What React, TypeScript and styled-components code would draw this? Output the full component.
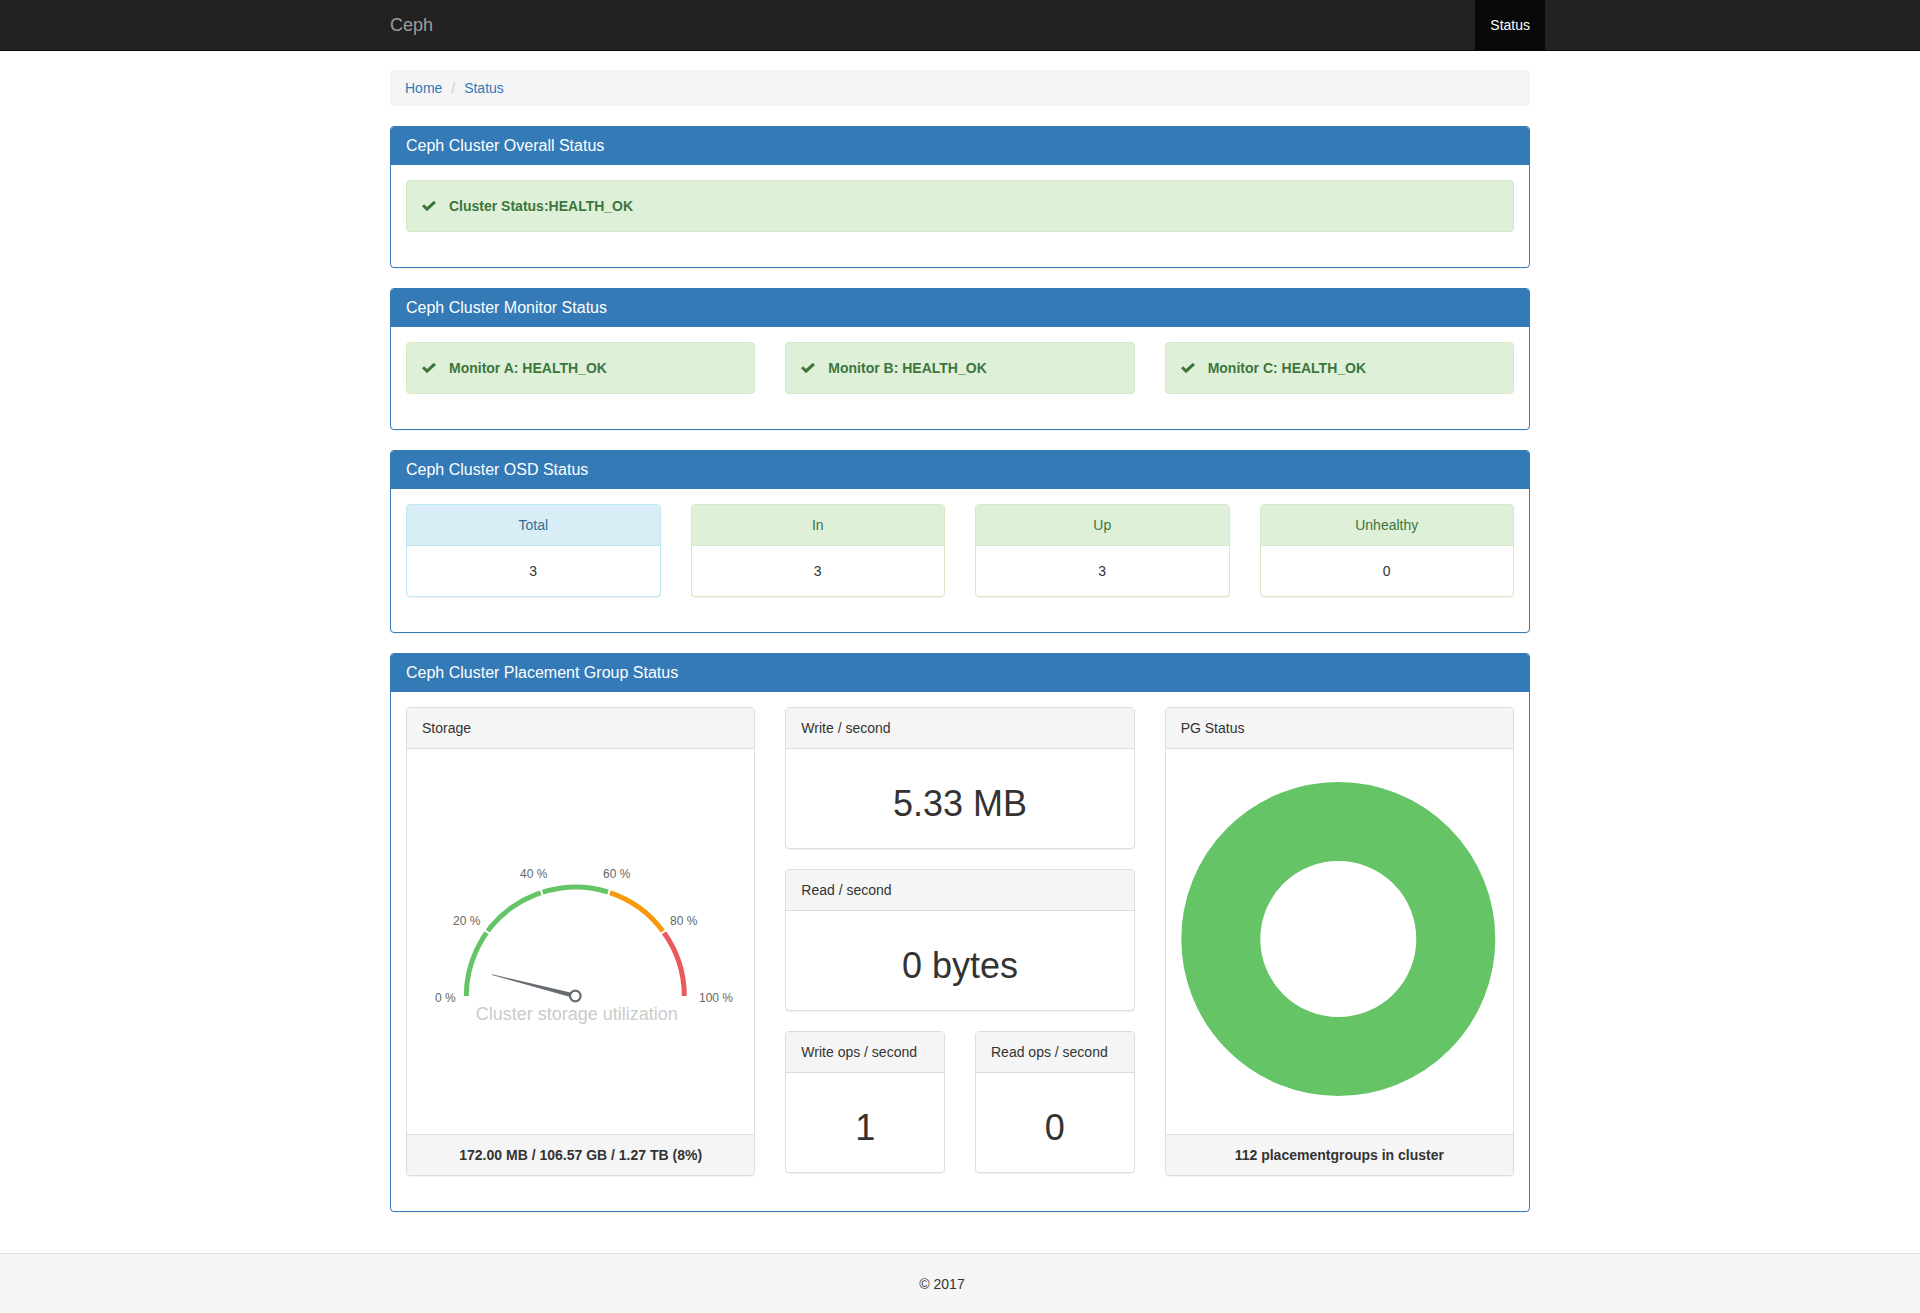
import React from "react";
import styled, { createGlobalStyle } from "styled-components";

const GlobalStyle = createGlobalStyle`
  *, *::before, *::after { box-sizing: border-box; }
  html, body { margin: 0; padding: 0; }
  body {
    font-family: "Liberation Sans", Arial, Helvetica, sans-serif;
    font-size: 14px;
    line-height: 1.42857143;
    color: #333;
    background: #fff;
  }
`;

type Variant = "primary" | "default" | "info" | "success";

const variants: Record<Variant, { border: string; headBg: string; headColor: string }> = {
  primary: { border: "#337ab7", headBg: "#337ab7", headColor: "#fff" },
  default: { border: "#ddd", headBg: "#f5f5f5", headColor: "#333" },
  info: { border: "#bce8f1", headBg: "#d9edf7", headColor: "#31708f" },
  success: { border: "#d6e9c6", headBg: "#dff0d8", headColor: "#3c763d" },
};

const Page = styled.div`
  display: flex;
  flex-direction: column;
  min-height: 100vh;
`;

const Navbar = styled.nav`
  background: #222;
  border-bottom: 1px solid #080808;
  height: 51px;
  margin-bottom: 19px;
`;

const NavInner = styled.div`
  width: 1170px;
  height: 100%;
  margin: 0 auto;
  padding: 0 15px;
  display: flex;
  justify-content: space-between;
  align-items: stretch;
`;

const Brand = styled.a`
  margin-left: -15px;
  padding: 15px;
  font-size: 18px;
  line-height: 20px;
  color: #9d9d9d;
  text-decoration: none;
`;

const NavLink = styled.a`
  margin-right: -15px;
  padding: 15px;
  line-height: 20px;
  color: #fff;
  background: #080808;
  text-decoration: none;
`;

const Container = styled.main`
  width: 1170px;
  margin: 0 auto;
  padding: 0 15px;
`;

const Breadcrumb = styled.ol`
  display: flex;
  list-style: none;
  margin: 0 0 20px;
  padding: 8px 15px;
  background: #f5f5f5;
  border-radius: 4px;
`;

const Crumb = styled.li`
  color: #337ab7;
`;

const CrumbSep = styled.li`
  color: #ccc;
  padding: 0 5px 0 9px;
`;

const Panel = styled.section<{ $variant: Variant }>`
  background: #fff;
  border: 1px solid ${(p) => variants[p.$variant].border};
  border-radius: 4px;
  box-shadow: 0 1px 1px rgba(0, 0, 0, 0.05);
  margin-bottom: 20px;
`;

const PanelHeading = styled.div<{ $variant: Variant; $center?: boolean }>`
  padding: 10px 15px;
  background: ${(p) => variants[p.$variant].headBg};
  color: ${(p) => variants[p.$variant].headColor};
  border-bottom: 1px solid ${(p) => variants[p.$variant].border};
  border-radius: 3px 3px 0 0;
  text-align: ${(p) => (p.$center ? "center" : "left")};
`;

const PanelTitle = styled.h3`
  margin: 0;
  font-size: 16px;
  font-weight: 400;
  line-height: 17px;
`;

const PanelBody = styled.div<{ $center?: boolean }>`
  padding: 15px;
  text-align: ${(p) => (p.$center ? "center" : "left")};
`;

const ChartBody = styled.div`
  height: 385px;
  display: flex;
  justify-content: center;
`;

const PanelFooter = styled.div`
  padding: 10px 15px;
  background: #f5f5f5;
  border-top: 1px solid #ddd;
  border-radius: 0 0 3px 3px;
  text-align: center;
  font-weight: 700;
`;

const Grid = styled.div<{ $cols: number }>`
  display: grid;
  grid-template-columns: repeat(${(p) => p.$cols}, minmax(0, 1fr));
  column-gap: 30px;
  align-items: start;
`;

const Column = styled.div`
  display: flex;
  flex-direction: column;
`;

const Alert = styled.div`
  display: flex;
  align-items: center;
  padding: 15px;
  margin-bottom: 20px;
  border: 1px solid #d6e9c6;
  border-radius: 4px;
  background: #dff0d8;
  color: #3c763d;
  font-weight: 700;
`;

const CheckIcon = styled.svg`
  width: 14px;
  height: 10px;
  margin-right: 13px;
  flex: none;
  position: relative;
  top: -0.5px;
`;

const BigValue = styled.h1`
  margin: 20px 0 10px;
  font-size: 36px;
  line-height: 39px;
  font-weight: 400;
  text-align: center;
  color: #333;
`;

const Footer = styled.footer`
  margin-top: auto;
  height: 60px;
  background: #f5f5f5;
  border-top: 1px solid #ddd;
  display: flex;
  align-items: center;
  justify-content: center;
  padding-right: 36px;
  color: #333;
`;

const Check = () => (
  <CheckIcon viewBox="0 0 14 10">
    <polygon points="0,5.3 2.1,3.2 5,6 11.8,-0.2 14,2 5,10.2" fill="#3c763d" />
  </CheckIcon>
);

const GREEN = "#64c466";
const ORANGE = "#f7990c";
const RED = "#ea5a5a";

const CX = 168.3;
const CY = 247;
const R = 109;

const pt = (p: number, r = R): [number, number] => {
  const a = Math.PI * (1 - p);
  return [CX + r * Math.cos(a), CY - r * Math.sin(a)];
};

const arcPath = (p0: number, p1: number) => {
  const [x0, y0] = pt(p0);
  const [x1, y1] = pt(p1);
  return `M${x0} ${y0} A${R} ${R} 0 0 1 ${x1} ${y1}`;
};

const gaugeLabels: { t: string; x: number; y: number }[] = [
  { t: "0 %", x: 38.3, y: 249 },
  { t: "20 %", x: 59.8, y: 172 },
  { t: "40 %", x: 126.7, y: 125 },
  { t: "60 %", x: 209.7, y: 125 },
  { t: "80 %", x: 276.8, y: 172 },
  { t: "100 %", x: 309, y: 249 },
];

const Gauge: React.FC<{ value: number }> = ({ value }) => {
  const tip = pt(value, 86);
  const dx = tip[0] - CX;
  const dy = tip[1] - CY;
  const len = Math.hypot(dx, dy);
  const nx = -dy / len;
  const ny = dx / len;
  const needle = [
    [CX + nx * 2.2, CY + ny * 2.2],
    [tip[0] + nx * 0.3, tip[1] + ny * 0.3],
    [tip[0] - nx * 0.3, tip[1] - ny * 0.3],
    [CX - nx * 2.2, CY - ny * 2.2],
  ]
    .map((q) => q.join(","))
    .join(" ");
  return (
    <svg width="347" height="385" viewBox="0 0 347 385">
      <path d={arcPath(0, 0.6)} fill="none" stroke={GREEN} strokeWidth={5} />
      <path d={arcPath(0.6, 0.8)} fill="none" stroke={ORANGE} strokeWidth={5} />
      <path d={arcPath(0.8, 1)} fill="none" stroke={RED} strokeWidth={5} />
      {[0.2, 0.4, 0.6, 0.8].map((p) => {
        const [x0, y0] = pt(p, R - 4);
        const [x1, y1] = pt(p, R + 4);
        return <line key={p} x1={x0} y1={y0} x2={x1} y2={y1} stroke="#fff" strokeWidth={2} />;
      })}
      {gaugeLabels.map((l) => (
        <text
          key={l.t}
          x={l.x}
          y={l.y}
          textAnchor="middle"
          dominantBaseline="central"
          fontSize={12}
          fill="#666"
          fontFamily="Liberation Sans, Arial, sans-serif"
        >
          {l.t}
        </text>
      ))}
      <polygon points={needle} fill="#676c72" />
      <circle cx={CX} cy={CY} r={5.3} fill="#fff" stroke="#676c72" strokeWidth={2.2} />
      <text
        x={169.8}
        y={270.5}
        textAnchor="middle"
        fontSize={18}
        fill="#cbcbcb"
        fontFamily="Liberation Sans, Arial, sans-serif"
      >
        Cluster storage utilization
      </text>
    </svg>
  );
};

const Donut = () => (
  <svg width="347" height="385" viewBox="0 0 347 385">
    <circle cx={172.3} cy={190} r={117.5} fill="none" stroke={GREEN} strokeWidth={79} />
  </svg>
);

const monitors = ["A", "B", "C"];

const osd: { label: string; value: number; variant: Variant }[] = [
  { label: "Total", value: 3, variant: "info" },
  { label: "In", value: 3, variant: "success" },
  { label: "Up", value: 3, variant: "success" },
  { label: "Unhealthy", value: 0, variant: "success" },
];

const StatPanel: React.FC<{ title: string; value: string }> = ({ title, value }) => (
  <Panel $variant="default">
    <PanelHeading $variant="default">{title}</PanelHeading>
    <PanelBody>
      <BigValue>{value}</BigValue>
    </PanelBody>
  </Panel>
);

export default function App() {
  return (
    <Page>
      <GlobalStyle />
      <Navbar>
        <NavInner>
          <Brand href="#">Ceph</Brand>
          <NavLink href="#">Status</NavLink>
        </NavInner>
      </Navbar>
      <Container>
        <Breadcrumb>
          <Crumb>Home</Crumb>
          <CrumbSep>/{"\u00a0"}</CrumbSep>
          <Crumb>Status</Crumb>
        </Breadcrumb>

        <Panel $variant="primary">
          <PanelHeading $variant="primary">
            <PanelTitle>Ceph Cluster Overall Status</PanelTitle>
          </PanelHeading>
          <PanelBody>
            <Alert>
              <Check />
              Cluster Status:HEALTH_OK
            </Alert>
          </PanelBody>
        </Panel>

        <Panel $variant="primary">
          <PanelHeading $variant="primary">
            <PanelTitle>Ceph Cluster Monitor Status</PanelTitle>
          </PanelHeading>
          <PanelBody>
            <Grid $cols={3}>
              {monitors.map((m) => (
                <Alert key={m}>
                  <Check />
                  Monitor {m}: HEALTH_OK
                </Alert>
              ))}
            </Grid>
          </PanelBody>
        </Panel>

        <Panel $variant="primary">
          <PanelHeading $variant="primary">
            <PanelTitle>Ceph Cluster OSD Status</PanelTitle>
          </PanelHeading>
          <PanelBody>
            <Grid $cols={4}>
              {osd.map((o) => (
                <Panel key={o.label} $variant={o.variant}>
                  <PanelHeading $variant={o.variant} $center>
                    {o.label}
                  </PanelHeading>
                  <PanelBody $center>{o.value}</PanelBody>
                </Panel>
              ))}
            </Grid>
          </PanelBody>
        </Panel>

        <Panel $variant="primary">
          <PanelHeading $variant="primary">
            <PanelTitle>Ceph Cluster Placement Group Status</PanelTitle>
          </PanelHeading>
          <PanelBody>
            <Grid $cols={3}>
              <Panel $variant="default">
                <PanelHeading $variant="default">Storage</PanelHeading>
                <ChartBody>
                  <Gauge value={0.08} />
                </ChartBody>
                <PanelFooter>172.00 MB / 106.57 GB / 1.27 TB (8%)</PanelFooter>
              </Panel>
              <Column>
                <StatPanel title="Write / second" value="5.33 MB" />
                <StatPanel title="Read / second" value="0 bytes" />
                <Grid $cols={2}>
                  <StatPanel title="Write ops / second" value="1" />
                  <StatPanel title="Read ops / second" value="0" />
                </Grid>
              </Column>
              <Panel $variant="default">
                <PanelHeading $variant="default">PG Status</PanelHeading>
                <ChartBody>
                  <Donut />
                </ChartBody>
                <PanelFooter>112 placementgroups in cluster</PanelFooter>
              </Panel>
            </Grid>
          </PanelBody>
        </Panel>
      </Container>
      <Footer>© 2017</Footer>
    </Page>
  );
}
